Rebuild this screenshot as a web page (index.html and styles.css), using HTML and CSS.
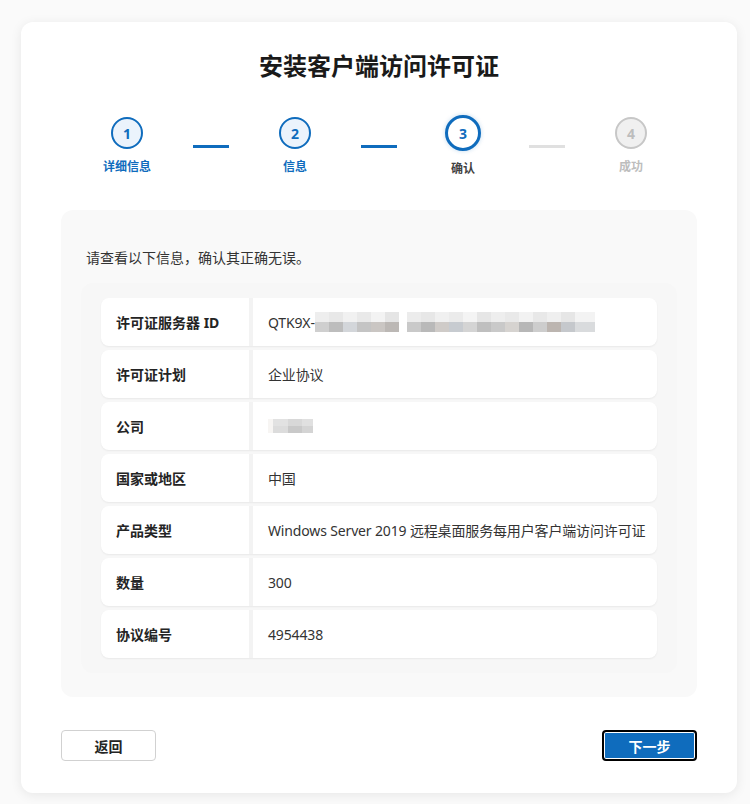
FILE: index.html
```html
<!DOCTYPE html>
<html>
<head>
    <meta charset="utf-8">
    <title>安装客户端访问许可证</title>
<link rel="stylesheet" href="styles.css">
</head>
<body>
    <div class="wizard">
        <h1>安装客户端访问许可证</h1>

        <div class="steps">
            <div class="step done">
                <div class="circle">1</div>
                <div class="step-label">详细信息</div>
            </div>
            <div class="line done"></div>
            <div class="step done">
                <div class="circle">2</div>
                <div class="step-label">信息</div>
            </div>
            <div class="line done"></div>
            <div class="step active">
                <div class="circle">3</div>
                <div class="step-label">确认</div>
            </div>
            <div class="line"></div>
            <div class="step">
                <div class="circle">4</div>
                <div class="step-label">成功</div>
            </div>
        </div>

        <div class="panel">
            <p class="intro">请查看以下信息，确认其正确无误。</p>
            <div class="info-list">
                <div class="row">
                    <div class="label">许可证服务器 ID</div>
                    <div class="value">QTK9X-<span class="redact redact-long"></span></div>
                </div>
                <div class="row">
                    <div class="label">许可证计划</div>
                    <div class="value">企业协议</div>
                </div>
                <div class="row">
                    <div class="label">公司</div>
                    <div class="value"><span class="redact redact-short"></span></div>
                </div>
                <div class="row">
                    <div class="label">国家或地区</div>
                    <div class="value">中国</div>
                </div>
                <div class="row">
                    <div class="label">产品类型</div>
                    <div class="value">Windows Server 2019 远程桌面服务每用户客户端访问许可证</div>
                </div>
                <div class="row">
                    <div class="label">数量</div>
                    <div class="value">300</div>
                </div>
                <div class="row">
                    <div class="label">协议编号</div>
                    <div class="value">4954438</div>
                </div>
            </div>
        </div>

        <div class="actions">
            <button type="button" class="btn">返回</button>
            <button type="button" class="btn btn-primary">下一步</button>
        </div>
    </div>
</body>
</html>
```

FILE: styles.css
```css
body {
    margin: 0;
    background-color: #fafafa;
    color: #242424;
    font-family: "Segoe UI", "Noto Sans", "Noto Sans CJK SC", sans-serif;
}

.wizard {
    width: 716px;
    box-sizing: border-box;
    margin: 22px 0 11px 21px;
    padding: 28px 40px 32px;
    background-color: #fff;
    border-radius: 12px;
    box-shadow: 0 2px 12px rgba(0, 0, 0, 0.08);
}

.wizard h1 {
    margin: 0;
    text-align: center;
    font-size: 24px;
    line-height: 32px;
    font-weight: 700;
    color: #1a1a1a;
}

/* stepper */
.steps {
    display: flex;
    align-items: center;
    justify-content: center;
    gap: 16px;
    margin: 33px 0 33px;
}

.step {
    width: 100px;
    display: flex;
    flex-direction: column;
    align-items: center;
    gap: 9px;
}

.circle {
    width: 32px;
    height: 32px;
    box-sizing: border-box;
    border: 2px solid #c7c7c7;
    border-radius: 50%;
    background-color: #f0f0f0;
    color: #bdbdbd;
    font-size: 14px;
    font-weight: 700;
    display: flex;
    align-items: center;
    justify-content: center;
}

.step-label {
    font-size: 12px;
    line-height: 17px;
    font-weight: 700;
    color: #bdbdbd;
}

.step.done .circle {
    border-color: #0f6cbd;
    background-color: #ebf3fc;
    color: #0f6cbd;
}

.step.done .step-label {
    color: #0f6cbd;
}

.step.active .circle {
    width: 36px;
    height: 36px;
    border: 3px solid #0f6cbd;
    background-color: #fff;
    color: #0f6cbd;
    box-shadow: 0 0 4px rgba(15, 108, 189, 0.25);
}

.step.active .step-label {
    color: #424242;
}

.line {
    width: 36px;
    height: 3px;
    background-color: #e0e0e0;
}

.line.done {
    background-color: #0f6cbd;
}

/* summary panel */
.panel {
    padding: 38px 20px 24px;
    background-color: #f9f9f9;
    border-radius: 12px;
}

.intro {
    margin: 0 0 15px 5px;
    font-size: 14px;
    line-height: 20px;
    color: #333;
}

.info-list {
    display: flex;
    flex-direction: column;
    gap: 4px;
    padding: 15px 20px;
    background-color: #f7f7f7;
    border-radius: 12px;
}

.row {
    display: flex;
    height: 48px;
    background-color: #fff;
    border-radius: 8px;
    box-shadow: 0 1px 2px rgba(0, 0, 0, 0.06);
    font-size: 14px;
}

.label {
    width: 152px;
    padding-left: 15px;
    box-sizing: border-box;
    border-right: 4px solid #f3f3f3;
    display: flex;
    align-items: center;
    font-weight: 700;
    color: #242424;
    flex-shrink: 0;
}

.value {
    flex: 1;
    padding-left: 15px;
    display: flex;
    align-items: center;
    color: #333;
    white-space: nowrap;
    letter-spacing: -0.15px;
}

.redact {
    display: inline-block;
}

.redact-long {
    width: 280px;
    height: 20px;
    background:
        linear-gradient(90deg,
            #eeeeee 0 14px, #e8e8e8 14px 28px, #f1f1f1 28px 42px, #e9e9e9 42px 56px,
            #f3f3f3 56px 70px, #e5e5e5 70px 84px, #fff 84px 92px, #ececec 92px 106px,
            #e7e7e7 106px 120px, #f0f0f0 120px 134px, #ebebeb 134px 148px, #f4f4f4 148px 162px,
            #e6e6e6 162px 176px, #eeeeee 176px 190px, #e9e9e9 190px 204px, #f2f2f2 204px 218px,
            #e8e8e8 218px 232px, #efefef 232px 246px, #e6e6e6 246px 260px, #f3f3f3 260px 280px)
            top / 100% 50% no-repeat,
        linear-gradient(90deg,
            #cfcfcf 0 14px, #bdbdbd 14px 28px, #d3d6da 28px 42px, #c4c4c4 42px 56px,
            #cac6c3 56px 70px, #bcb8b5 70px 84px, #fff 84px 92px, #c9c9c9 92px 106px,
            #b9b9b9 106px 120px, #cfcbc8 120px 134px, #c7cbd0 134px 148px, #d4d4d4 148px 162px,
            #bfbfbf 162px 176px, #c9c9c9 176px 190px, #d6d3d0 190px 204px, #b7b7b7 204px 218px,
            #cdcdcd 218px 232px, #bcb5b0 232px 246px, #c5c8cc 246px 260px, #d9dbdd 260px 280px)
            bottom / 100% 50% no-repeat;
}

.redact-short {
    width: 45px;
    height: 14px;
    background:
        linear-gradient(90deg, #f7f5f3 0 5px, #e2e2e2 5px 20px, #d8d8d8 20px 34px, #e0e0e0 34px 45px)
            top / 100% 50% no-repeat,
        linear-gradient(90deg, #f7f5f3 0 5px, #dcdcdc 5px 20px, #c9c9c9 20px 34px, #d4d4d4 34px 45px)
            bottom / 100% 50% no-repeat;
}

/* buttons */
.actions {
    display: flex;
    justify-content: space-between;
    margin-top: 33px;
}

.btn {
    width: 95px;
    height: 31px;
    border: 1px solid #d1d1d1;
    border-radius: 4px;
    background-color: #fff;
    color: #242424;
    font-family: inherit;
    font-size: 14px;
    font-weight: 700;
    cursor: pointer;
}

.btn-primary {
    border: 2px solid #000;
    background-color: #0f6cbd;
    color: #fff;
    box-shadow: inset 0 0 0 1px #fff;
}
```
